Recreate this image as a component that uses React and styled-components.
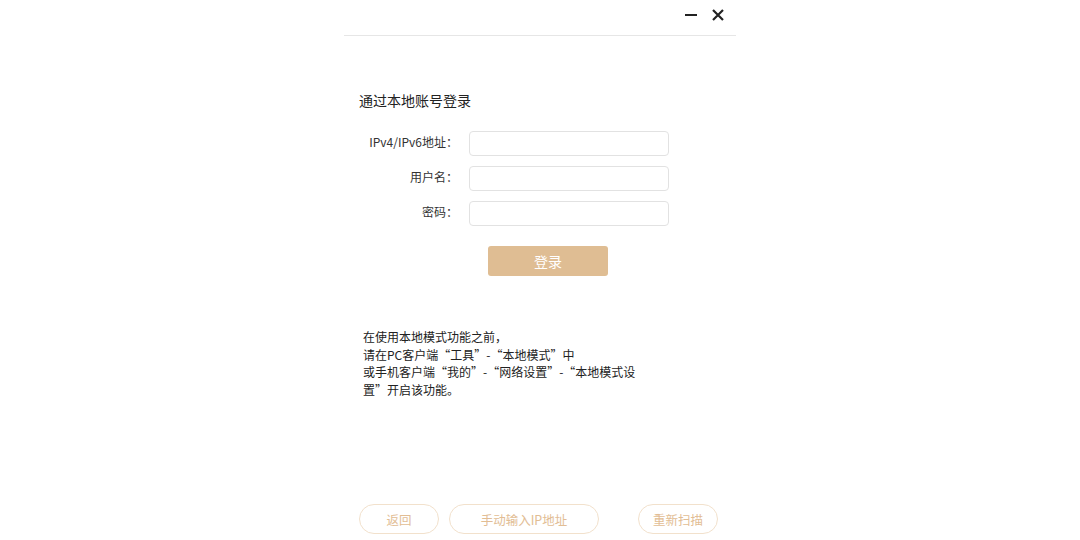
import React from "react";
import styled, { createGlobalStyle } from "styled-components";

const GlobalStyle = createGlobalStyle`
  html, body {
    margin: 0;
    padding: 0;
    background: #fff;
  }
  body {
    font-family: "Noto Sans CJK SC", "Noto Sans", sans-serif;
    color: #333;
  }
`;

const Page = styled.div`
  width: 1080px;
  height: 540px;
  display: flex;
  justify-content: center;
  background: #fff;
`;

const Panel = styled.div`
  width: 392px;
  height: 540px;
  display: flex;
  flex-direction: column;
`;

const Header = styled.div`
  height: 35px;
  border-bottom: 1px solid #e6e6e6;
  display: flex;
  justify-content: flex-end;
  align-items: center;
  gap: 11px;
  padding-right: 10px;
`;

const WinButton = styled.button`
  width: 16px;
  height: 16px;
  padding: 0;
  border: none;
  background: transparent;
  display: flex;
  align-items: center;
  justify-content: center;
  margin-top: -5px;
  cursor: pointer;
`;

const Body = styled.div`
  padding: 54px 15px 0;
  display: flex;
  flex-direction: column;
`;

const Title = styled.div`
  font-size: 14px;
  line-height: 20px;
  color: #222;
  margin-bottom: 21px;
`;

const Row = styled.div`
  display: flex;
  align-items: center;
  margin-bottom: 10px;
`;

const Label = styled.label`
  width: 99px;
  text-align: right;
  font-size: 12px;
  line-height: 16px;
  padding-bottom: 3px;
  color: #333;
  margin-right: 11px;
`;

const Input = styled.input`
  width: 200px;
  height: 25px;
  box-sizing: border-box;
  border: 1px solid #e2e2e2;
  border-radius: 4px;
  outline: none;
`;

const Primary = styled.button`
  width: 120px;
  height: 30px;
  margin: 10px 0 0 129px;
  border: none;
  border-radius: 3px;
  background: #dfbd93;
  color: #fff;
  font-family: inherit;
  font-size: 14px;
`;

const Note = styled.div`
  margin: 52px 0 0 4px;
  font-size: 12px;
  line-height: 17.5px;
  color: #222;
`;

const Footer = styled.div`
  margin-top: auto;
  padding: 0 18px 6px 15px;
  display: flex;
  gap: 10px;
`;

const Ghost = styled.button`
  width: ${(p) => p.$w}px;
  height: 30px;
  box-sizing: border-box;
  border: 1px solid #f2e1cc;
  border-radius: 15px;
  background: #fff;
  color: #e2bd94;
  font-family: inherit;
  font-size: 12.5px;
  margin-left: ${(p) => (p.$push ? "auto" : "0")};
`;

const fields = [
  { label: "IPv4/IPv6地址：" },
  { label: "用户名：" },
  { label: "密码：", type: "password" },
];

export default function App() {
  return (
    <>
      <GlobalStyle />
      <Page>
        <Panel>
          <Header>
            <WinButton aria-label="minimize">
              <svg width="12" height="12" viewBox="0 0 12 12">
                <rect x="0" y="5" width="12" height="2" fill="#222" />
              </svg>
            </WinButton>
            <WinButton aria-label="close">
              <svg width="12" height="12" viewBox="0 0 12 12">
                <path d="M1 1 L11 11 M11 1 L1 11" stroke="#222" strokeWidth="2.2" />
              </svg>
            </WinButton>
          </Header>
          <Body>
            <Title>通过本地账号登录</Title>
            {fields.map((f) => (
              <Row key={f.label}>
                <Label>{f.label}</Label>
                <Input type={f.type || "text"} />
              </Row>
            ))}
            <Primary>登录</Primary>
            <Note>
              在使用本地模式功能之前，
              <br />
              请在PC客户端“工具”-“本地模式”中
              <br />
              或手机客户端“我的”-“网络设置”-“本地模式设
              <br />
              置”开启该功能。
            </Note>
          </Body>
          <Footer>
            <Ghost $w={80}>返回</Ghost>
            <Ghost $w={150}>手动输入IP地址</Ghost>
            <Ghost $w={80} $push>
              重新扫描
            </Ghost>
          </Footer>
        </Panel>
      </Page>
    </>
  );
}
